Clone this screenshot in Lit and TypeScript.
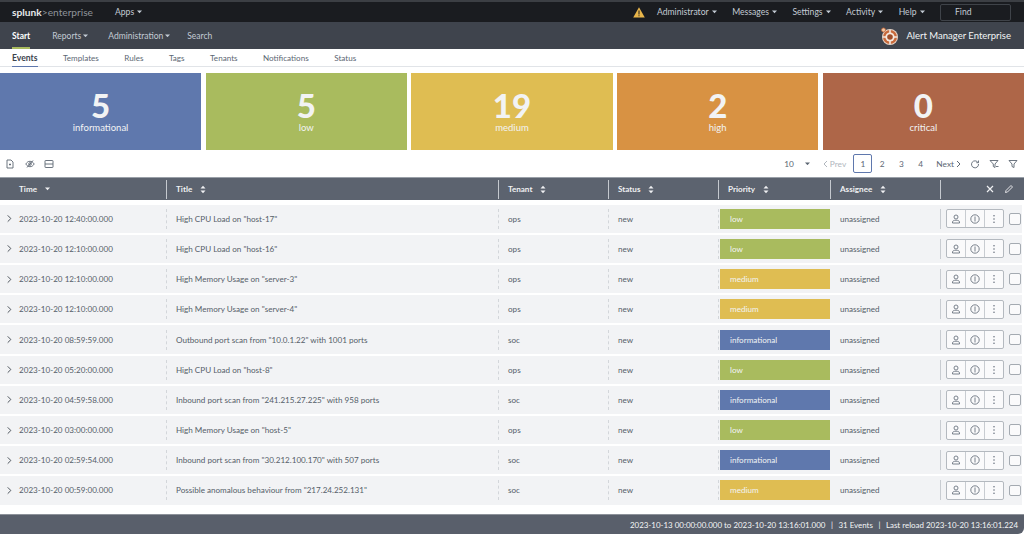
import { LitElement, html, css, svg } from "lit";
import { customElement } from "lit/decorators.js";

const caret = html`<svg class="caret" viewBox="0 0 6 4" width="5" height="3.5"><path d="M0 0.5h6L3 3.7z" fill="currentColor"/></svg>`;
const sort = html`<svg class="sort" viewBox="0 0 6 9" width="6" height="9"><path d="M0.5 3.6L3 0.8l2.5 2.8zM0.5 5.4L3 8.2l2.5-2.8z" fill="currentColor"/></svg>`;
const chevL = html`<svg viewBox="0 0 5 8" width="5" height="8" fill="none" stroke="currentColor"><path d="M4 1L1 4l3 3"/></svg>`;
const chevR = html`<svg viewBox="0 0 5 8" width="5" height="8" fill="none" stroke="currentColor"><path d="M1 1l3 3-3 3"/></svg>`;

const COLORS: Record<string, string> = {
  informational: "#5f78ad",
  low: "#a9bb5e",
  medium: "#dfbd52",
  high: "#d89243",
  critical: "#ae6648",
};

const cards = [
  ["5", "informational"],
  ["5", "low"],
  ["19", "medium"],
  ["2", "high"],
  ["0", "critical"],
];

const rows = [
  ["2023-10-20 12:40:00.000", 'High CPU Load on "host-17"', "ops", "low"],
  ["2023-10-20 12:10:00.000", 'High CPU Load on "host-16"', "ops", "low"],
  ["2023-10-20 12:10:00.000", 'High Memory Usage on "server-3"', "ops", "medium"],
  ["2023-10-20 12:10:00.000", 'High Memory Usage on "server-4"', "ops", "medium"],
  ["2023-10-20 08:59:59.000", 'Outbound port scan from "10.0.1.22" with 1001 ports', "soc", "informational"],
  ["2023-10-20 05:20:00.000", 'High CPU Load on "host-8"', "ops", "low"],
  ["2023-10-20 04:59:58.000", 'Inbound port scan from "241.215.27.225" with 958 ports', "soc", "informational"],
  ["2023-10-20 03:00:00.000", 'High Memory Usage on "host-5"', "ops", "low"],
  ["2023-10-20 02:59:54.000", 'Inbound port scan from "30.212.100.170" with 507 ports', "soc", "informational"],
  ["2023-10-20 00:59:00.000", 'Possible anomalous behaviour from "217.24.252.131"', "soc", "medium"],
];

const ico = (body: unknown, s = 10) =>
  html`<svg class="ico" viewBox="0 0 10 10" width=${s} height=${s} fill="none" stroke="currentColor" stroke-width="0.9">${body}</svg>`;

const iconUser = ico(svg`<circle cx="5" cy="3" r="2"/><path d="M1.5 9V8c0-1.2 1.5-1.8 3.5-1.8S8.5 6.8 8.5 8v1z"/>`);
const iconInfo = ico(svg`<circle cx="5" cy="5" r="4.2"/><path d="M5 2.5v5"/>`);
const iconDots = ico(svg`<g fill="currentColor" stroke="none"><circle cx="5" cy="1.8" r="0.8"/><circle cx="5" cy="5" r="0.8"/><circle cx="5" cy="8.2" r="0.8"/></g>`);

@customElement("app-root")
export class AppRoot extends LitElement {
  static styles = css`
    :host {
      display: flex;
      flex-direction: column;
      width: 1024px;
      height: 534px;
      overflow: hidden;
      background: #fff;
      font-family: Lato, "Liberation Sans", sans-serif;
      font-size: 8.1px;
      color: #3c444d;
    }
    .top {
      height: 22px;
      box-sizing: border-box;
      border-top: 2px solid #3c3f44;
      background: #1a1c20;
      display: flex;
      align-items: center;
      color: #c3cbd4;
      padding: 0 13px 0 12px;
      flex: none;
      font-size: 8.6px;
    }
    .logo { font-size: 10.2px; color: #8f949a; width: 103px; }
    .logo b { color: #e6e8ea; font-weight: 700; }
    .menu { display: flex; align-items: center; gap: 3px; }
    .caret { flex: none; }
    .right { margin-left: auto; display: flex; align-items: center; gap: 15.5px; }
    .warn { margin-right: -3px; display: block; }
    .find {
      width: 71px;
      height: 17px;
      box-sizing: border-box;
      border: 1px solid #3f4349;
      border-radius: 2px;
      padding-left: 14px;
      display: flex;
      align-items: center;
    }
    .nav {
      height: 27px;
      flex: none;
      background: #3f444d;
      display: flex;
      align-items: stretch;
      color: #c3cbd4;
      padding: 0 13px 0 12px;
      gap: 20px;
      font-size: 8.5px;
    }
    .nav > div { display: flex; align-items: center; gap: 2px; }
    .nav .start { color: #fff; font-weight: 700; border-bottom: 2px solid #a9bb5e; box-sizing: border-box; padding-top: 2px; margin-right: 2px; }
    .nav .search { margin-left: -3px; }
    .brand { margin-left: auto; color: #f2f4f5; font-size: 9.5px; gap: 7px !important; }
    .tabs {
      height: 18px;
      flex: none;
      display: flex;
      padding: 0 12px;
      gap: 25.5px;
      border-bottom: 1px solid #e1e4e8;
      align-items: stretch;
      color: #5c6773;
      box-sizing: border-box;
    }
    .tabs > div { display: flex; align-items: center; }
    .tabs .on { color: #3c444d; font-weight: 700; font-size: 8.6px; border-bottom: 1.5px solid #5f78ad; margin-bottom: -1px; }
    .cards {
      display: grid;
      grid-template-columns: repeat(5, 1fr);
      gap: 4.5px;
      margin-top: 6px;
      height: 77px;
      flex: none;
    }
    .card {
      color: #f2f3f4;
      display: flex;
      flex-direction: column;
      align-items: center;
      padding-top: 17px;
      box-sizing: border-box;
    }
    .num { font-size: 33px; font-weight: 900; line-height: 30px; }
    .lab { font-size: 9.5px; line-height: 12px; margin-top: 2px; }
    .tools {
      height: 27px;
      flex: none;
      display: flex;
      align-items: center;
      padding: 0 6px 0 5px;
      color: #5c6773;
    }
    .tleft { display: flex; gap: 9.5px; }
    .pager { margin-left: auto; display: flex; align-items: center; color: #5c6773; font-size: 8.3px; }
    .size { display: flex; align-items: center; gap: 11px; margin-right: 13px; }
    .prev { color: #b0b6bd; margin-right: 7px; display: flex; align-items: center; gap: 2px; }
    .p { width: 19.3px; height: 18.5px; box-sizing: border-box; display: flex; align-items: center; justify-content: center; }
    .p.on { border: 1px solid #5f78ad; border-radius: 2px; }
    .next { margin: 0 9px 0 6px; display: flex; align-items: center; gap: 2px; }
    .ptools { display: flex; gap: 9px; }
    .grid { display: grid; grid-template-columns: 167px 332px 110px 110px 112px 110px 83px; }
    .head {
      height: 23px;
      flex: none;
      background: #5c636f;
      color: #f0f1f3;
      border-top: 1px solid #9aa0a8;
      box-sizing: border-box;
      font-weight: 700;
      align-items: center;
    }
    .head > div { height: 19px; display: flex; align-items: center; gap: 8px; padding-left: 9px; border-right: 1px solid #c5c9cf; box-sizing: border-box; }
    .head > div:first-child { padding-left: 19px; }
    .head > div:last-child { border: 0; justify-content: flex-end; padding-right: 10px; gap: 9px; }
    .body { flex: none; padding: 4.7px 2px 0 0; height: 314px; box-sizing: border-box; }
    .row {
      grid-template-columns: 167px 332px 110px 110px 112px 110px 81px;
      height: 28.2px;
      margin-bottom: 2px;
      background: #f2f3f5;
      align-items: center;
      color: #555e69;
    }
    .row > div { height: 20px; display: flex; align-items: center; padding-left: 9px; border-right: 1px dashed #d3d6da; box-sizing: border-box; }
    .row .cell-time { gap: 5px; padding-left: 5px; }
    .cell-time .ico { color: #3c444d; }
    .row .cell-pri { padding: 0; border: 0; }
    .row .cell-asg { border-right: 1px solid #c8ccd1; }
    .row .cell-act { border: 0; padding-left: 5px; gap: 5px; }
    .pri { width: 110px; margin-left: 1px; height: 20px; color: #f2f3f4; display: flex; align-items: center; padding-left: 10px; box-sizing: border-box; }
    .btns { display: flex; height: 19px; border: 1px solid #b4b9bf; border-radius: 2px; box-sizing: border-box; background: #fafafb; }
    .btns span { width: 18px; display: flex; align-items: center; justify-content: center; color: #6b7480; border-right: 1px solid #c8ccd1; }
    .btns span:last-child { border: 0; }
    .check { width: 12px; height: 11.5px; box-sizing: border-box; border: 1px solid #a4aab1; border-radius: 2px; background: #fafafb; }
    .foot {
      margin-top: auto;
      height: 20px;
      flex: none;
      background: #595f6b;
      border-top: 1px solid #8d929a;
      box-sizing: border-box;
      color: #f4f5f6;
      font-size: 7.95px;
      display: flex;
      align-items: center;
      justify-content: flex-end;
      padding-right: 6px;
      border-bottom-right-radius: 6px;
    }
    .sep { margin: 0 5.5px; }
  `;

  render() {
    return html`
      <div class="top">
        <div class="logo"><b>splunk</b>&gt;enterprise</div>
        <div class="menu">Apps ${caret}</div>
        <div class="right">
          <svg class="warn" width="12" height="11" viewBox="0 0 12 11"><path d="M6 0.3L11.8 10.5H0.2z" fill="#e8b54a"/><path d="M5.5 3.5h1v4h-1zM5.5 8.2h1v1.1h-1z" fill="#1a1c20"/></svg>
          ${["Administrator", "Messages", "Settings", "Activity", "Help"].map((m) => html`<div class="menu">${m} ${caret}</div>`)}
          <div class="find">Find</div>
        </div>
      </div>
      <div class="nav">
        <div class="start">Start</div>
        <div>Reports ${caret}</div>
        <div>Administration ${caret}</div>
        <div class="search">Search</div>
        <div class="brand">
          <svg width="20" height="20" viewBox="0 0 20 20"><circle cx="11" cy="11" r="8" fill="#e9d6c8"/><circle cx="11" cy="11" r="7" fill="#c8693a"/><circle cx="11" cy="11" r="4.6" fill="#f4e8df"/><path d="M11 4v4M11 14v4M4 11h4M14 11h4" stroke="#f4e8df" stroke-width="1.6"/><circle cx="11" cy="11" r="2.8" fill="#a04e2a"/><circle cx="4.5" cy="4" r="2" fill="#f0c9a8" stroke="#c8693a" stroke-width="0.8"/></svg>
          Alert Manager Enterprise
        </div>
      </div>
      <div class="tabs">
        <div class="on">Events</div>
        ${["Templates", "Rules", "Tags", "Tenants", "Notifications", "Status"].map((t) => html`<div>${t}</div>`)}
      </div>
      <div class="cards">
        ${cards.map(([n, l]) => html`<div class="card" style="background:${COLORS[l]}"><div class="num">${n}</div><div class="lab">${l}</div></div>`)}
      </div>
      <div class="tools">
        <div class="tleft">
          ${ico(svg`<path d="M2 1h4l2 2v6H2zM4 5.5h2M5 4.5v2"/>`)}
          ${ico(svg`<path d="M0.8 5C2 3 3.5 2.3 5 2.3S8 3 9.2 5C8 7 6.5 7.7 5 7.7S2 7 0.8 5zM2 8.5L8 1.5"/><circle cx="5" cy="5" r="1.3"/>`)}
          ${ico(svg`<rect x="1" y="1.5" width="8" height="7" rx="0.5"/><path d="M1 5h8"/>`)}
        </div>
        <div class="pager">
          <div class="size">10 ${caret}</div>
          <div class="prev">${chevL}<span>Prev</span></div>
          <div class="p on">1</div><div class="p">2</div><div class="p">3</div><div class="p">4</div>
          <div class="next"><span>Next</span>${chevR}</div>
          <div class="ptools">
            ${ico(svg`<path d="M8 3.5A3.5 3.5 0 1 0 8.5 5M8.5 1.5v2.2H6.3"/>`)}
            ${ico(svg`<path d="M1 1.5h8L6 5v3.5L4.3 7.5V5zM7 7.5h2.5"/>`)}
            ${ico(svg`<path d="M1 1.5h8L6 5v3.5L4 7.5V5z"/>`)}
          </div>
        </div>
      </div>
      <div class="grid head">
        <div>Time ${caret}</div>
        ${["Title", "Tenant", "Status", "Priority", "Assignee"].map((h) => html`<div>${h} ${sort}</div>`)}
        <div>
          ${ico(svg`<path d="M2 2l6 6M8 2l-6 6" stroke-width="1.2"/>`)}
          ${ico(svg`<path d="M1.5 8.5l0.5-2L7 1.5 8.5 3l-5 5z"/>`)}
        </div>
      </div>
      <div class="body">
        ${rows.map(
          ([t, title, ten, pri]) => html`<div class="grid row">
            <div class="cell-time">${ico(svg`<path d="M3 1.5L6.5 5 3 8.5" stroke-width="1"/>`, 9)}<span>${t}</span></div>
            <div>${title}</div>
            <div>${ten}</div>
            <div>new</div>
            <div class="cell-pri"><div class="pri" style="background:${COLORS[pri]}">${pri}</div></div>
            <div class="cell-asg">unassigned</div>
            <div class="cell-act"><div class="btns"><span>${iconUser}</span><span>${iconInfo}</span><span>${iconDots}</span></div><div class="check"></div></div>
          </div>`
        )}
      </div>
      <div class="foot">2023-10-13 00:00:00.000 to 2023-10-20 13:16:01.000<span class="sep">|</span>31 Events<span class="sep">|</span>Last reload 2023-10-20 13:16:01.224</div>
    `;
  }
}
